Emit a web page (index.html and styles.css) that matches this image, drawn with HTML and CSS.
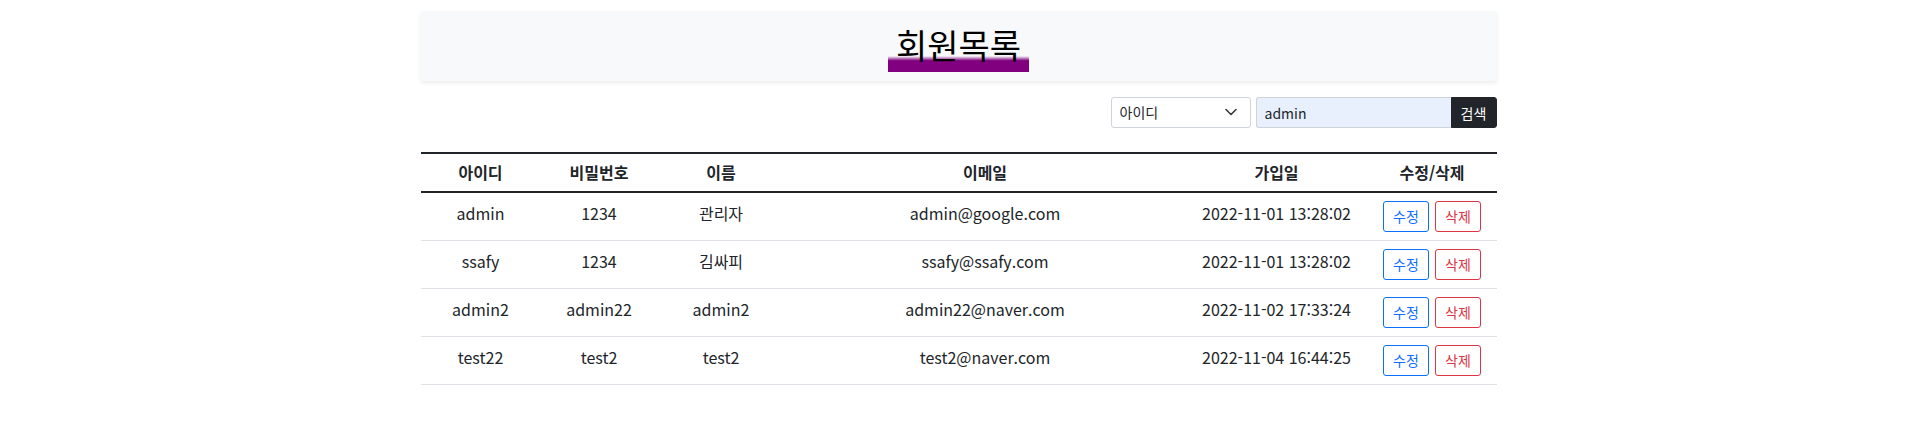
FILE: index.html
```html
<!DOCTYPE html>
<html lang="ko">
<head>
<meta charset="utf-8">
<title>회원목록</title>
<link rel="stylesheet" href="styles.css">
</head>
<body>
<div class="container">
  <header class="page-header">
    <h2 class="title"><span class="title-mark">회원목록</span></h2>
  </header>

  <form class="search-form">
    <div class="select-wrap">
      <select class="form-select">
        <option>아이디</option>
        <option>이름</option>
      </select>
      <svg class="chevron" width="12" height="8" viewBox="0 0 12 8" aria-hidden="true"><path d="M1 1.5l5 5 5-5" fill="none" stroke="#343a40" stroke-width="1.6" stroke-linecap="round" stroke-linejoin="round"/></svg>
    </div>
    <div class="input-group">
      <input class="form-control" type="text" value="admin">
      <button class="btn-search" type="button">검색</button>
    </div>
  </form>

  <table class="member-table">
    <colgroup>
      <col class="c-id"><col class="c-pw"><col class="c-name"><col class="c-email"><col class="c-date"><col class="c-act">
    </colgroup>
    <thead>
      <tr><th>아이디</th><th>비밀번호</th><th>이름</th><th>이메일</th><th>가입일</th><th>수정/삭제</th></tr>
    </thead>
    <tbody>
      <tr><td>admin</td><td>1234</td><td>관리자</td><td>admin@google.com</td><td>2022-11-01 13:28:02</td><td><div class="actions"><button class="btn btn-edit">수정</button><button class="btn btn-del">삭제</button></div></td></tr>
      <tr><td>ssafy</td><td>1234</td><td>김싸피</td><td>ssafy@ssafy.com</td><td>2022-11-01 13:28:02</td><td><div class="actions"><button class="btn btn-edit">수정</button><button class="btn btn-del">삭제</button></div></td></tr>
      <tr><td>admin2</td><td>admin22</td><td>admin2</td><td>admin22@naver.com</td><td>2022-11-02 17:33:24</td><td><div class="actions"><button class="btn btn-edit">수정</button><button class="btn btn-del">삭제</button></div></td></tr>
      <tr><td>test22</td><td>test2</td><td>test2</td><td>test2@naver.com</td><td>2022-11-04 16:44:25</td><td><div class="actions"><button class="btn btn-edit">수정</button><button class="btn btn-del">삭제</button></div></td></tr>
    </tbody>
  </table>
</div>
</body>
</html>
```

FILE: styles.css
```css
* { box-sizing: border-box; }

body {
  margin: 0;
  background: #fff;
  color: #212529;
  font-family: "Noto Sans CJK KR", "Noto Sans", sans-serif;
  font-size: 16px;
  line-height: 1.5;
  font-variant-ligatures: no-contextual;
  font-feature-settings: "calt" 0;
}

.container {
  width: 1076px;
  margin: 0 auto;
  padding-top: 11px;
}

.page-header {
  background: #f8f9fa;
  box-shadow: 0 2px 4px rgba(0, 0, 0, 0.075);
  padding: 14px 0 9px;
  text-align: center;
}

.title {
  margin: 0;
  font-size: 34px;
  font-weight: 400;
  line-height: 40px;
}

.title-mark {
  display: inline-block;
  padding: 0 8px 7px;
  background: linear-gradient(180deg, rgba(255, 255, 255, 0) 66%, #800080 76%);
  color: #000;
}

.search-form {
  display: flex;
  justify-content: flex-end;
  gap: 5px;
  margin-top: 16px;
  margin-bottom: 24px;
}

.select-wrap {
  position: relative;
  width: 140px;
  height: 31px;
}

.form-select {
  appearance: none;
  -webkit-appearance: none;
  width: 100%;
  height: 31px;
  padding: 0 36px 0 8px;
  border: 1px solid #ced4da;
  border-radius: 3px;
  background: #fff;
  color: #212529;
  font-family: inherit;
  font-size: 14px;
  line-height: 21px;
}

.chevron {
  position: absolute;
  right: 14px;
  top: 11px;
  pointer-events: none;
}

.input-group {
  display: flex;
  width: 241px;
  height: 31px;
}

.form-control {
  flex: 1;
  min-width: 0;
  height: 31px;
  padding: 0 8px;
  border: 1px solid #ced4da;
  border-right: 0;
  border-radius: 3px 0 0 3px;
  background: #e8f0fe;
  color: #212529;
  font-family: inherit;
  font-size: 14px;
}

.btn-search {
  width: 46px;
  height: 31px;
  padding: 0;
  border: 1px solid #212529;
  border-radius: 0 3px 3px 0;
  background: #212529;
  color: #fff;
  font-family: inherit;
  font-size: 14px;
}

.member-table {
  width: 100%;
  border-collapse: collapse;
  table-layout: fixed;
  border-top: 2px solid #212529;
}

.c-id { width: 120px; }
.c-pw { width: 117px; }
.c-name { width: 127px; }
.c-email { width: 401px; }
.c-date { width: 182px; }
.c-act { width: 129px; }

.member-table th {
  padding: 6px 8px 7px;
  font-weight: 700;
  text-align: center;
  vertical-align: top;
  line-height: 24px;
  border-bottom: 2px solid #212529;
}

.member-table td {
  height: 48px;
  padding: 8px;
  text-align: center;
  vertical-align: top;
  line-height: 24px;
  border-bottom: 1px solid #dee2e6;
}

.actions {
  display: flex;
  justify-content: center;
  gap: 6px;
}

.btn {
  width: 46px;
  height: 31px;
  padding: 0;
  border-radius: 3px;
  background: #fff;
  font-family: inherit;
  font-size: 14px;
  line-height: 21px;
}

.btn-edit {
  border: 1px solid #0d6efd;
  color: #0d6efd;
}

.btn-del {
  border: 1px solid #dc3545;
  color: #dc3545;
}
```
